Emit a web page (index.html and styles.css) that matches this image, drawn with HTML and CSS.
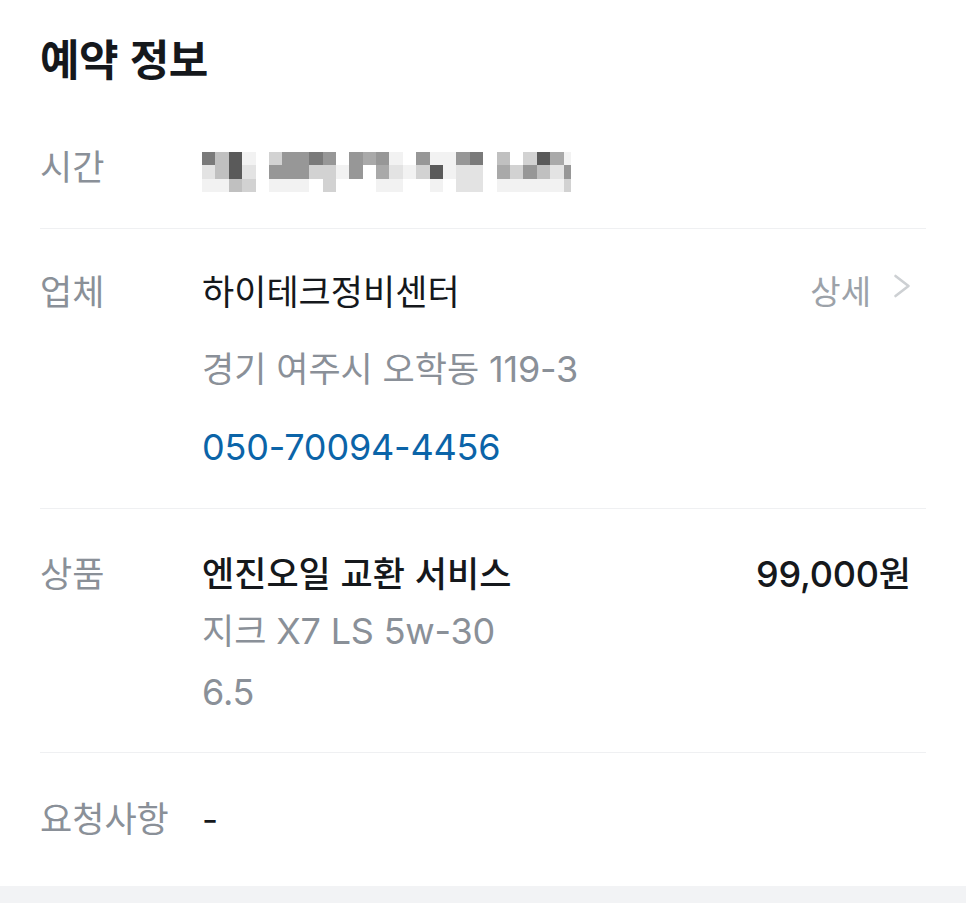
FILE: index.html
```html
<!DOCTYPE html>
<html lang="ko">
<head>
<meta charset="utf-8">
<title>예약 정보</title>
<link rel="stylesheet" href="styles.css">
</head>
<body>
<main class="card">
  <h1 class="title">예약 정보</h1>

  <section class="row row-time">
    <div class="label">시간</div>
    <div class="value">
      <div class="mosaic" aria-label="가려진 예약 시간">
        <span class="s7"></span><span class="s2"></span><span class="s1"></span>
        <span class="s4"></span><span class="s4"></span><span class="s1"></span>
        <span class="s8"></span><span class="s8"></span><span class="s4"></span>
        <span class="s1"></span><span class="s2"></span><span class="s3"></span>
        <span class="s0"></span><span class="s0"></span><span class="s0"></span>
        <span class="s3"></span><span class="s6"></span><span class="s1"></span>
        <span class="s6"></span><span class="s6"></span><span class="s1"></span>
        <span class="s6"></span><span class="s6"></span><span class="s1"></span>
        <span class="s7"></span><span class="s3"></span><span class="s0"></span>
        <span class="s6"></span><span class="s3"></span><span class="s3"></span>
        <span class="s0"></span><span class="s1"></span><span class="s0"></span>
        <span class="s6"></span><span class="s6"></span><span class="s0"></span>
        <span class="s5"></span><span class="s0"></span><span class="s0"></span>
        <span class="s6"></span><span class="s5"></span><span class="s1"></span>
        <span class="s1"></span><span class="s2"></span><span class="s1"></span>
        <span class="s0"></span><span class="s1"></span><span class="s0"></span>
        <span class="s6"></span><span class="s3"></span><span class="s0"></span>
        <span class="s1"></span><span class="s8"></span><span class="s1"></span>
        <span class="s1"></span><span class="s1"></span><span class="s0"></span>
        <span class="s6"></span><span class="s2"></span><span class="s2"></span>
        <span class="s7"></span><span class="s2"></span><span class="s2"></span>
        <span class="s0"></span><span class="s0"></span><span class="s0"></span>
        <span class="s4"></span><span class="s5"></span><span class="s1"></span>
        <span class="s0"></span><span class="s3"></span><span class="s1"></span>
        <span class="s3"></span><span class="s6"></span><span class="s1"></span>
        <span class="s8"></span><span class="s4"></span><span class="s1"></span>
        <span class="s5"></span><span class="s2"></span><span class="s1"></span>
        <span class="s1"></span><span class="s6"></span><span class="s3"></span>
      </div>
    </div>
  </section>

  <section class="row row-shop">
    <div class="label">업체</div>
    <div class="value">
      <div class="line-main">
        <span class="name">하이테크정비센터</span>
        <a class="detail" href="#">상세
          <svg class="chevron" width="18" height="24" viewBox="0 0 18 24" aria-hidden="true">
            <polyline points="2.5,2 15.5,12 2.5,22" fill="none" stroke="#cdd0d3" stroke-width="2.6" stroke-linecap="round" stroke-linejoin="round"/>
          </svg>
        </a>
      </div>
      <div class="sub addr">경기 여주시 오학동 <span class="lat">119-3</span></div>
      <div class="phone"><span class="lat">050-70094-4456</span></div>
    </div>
  </section>

  <section class="row row-product">
    <div class="label">상품</div>
    <div class="value">
      <div class="line-main">
        <span class="name strong">엔진오일 교환 서비스</span>
        <span class="price"><span class="lat">99,000</span>원</span>
      </div>
      <div class="sub spec">지크 <span class="lat">X7 LS 5w-30</span></div>
      <div class="sub qty"><span class="lat">6.5</span></div>
    </div>
  </section>

  <section class="row row-request">
    <div class="label">요청사항</div>
    <div class="value"><span class="dash">-</span></div>
  </section>
</main>
<div class="band"></div>
</body>
</html>
```

FILE: styles.css
```css
* { box-sizing: border-box; }

html, body {
  margin: 0;
  padding: 0;
  background: #ffffff;
}

body {
  font-family: "Noto Sans CJK KR", "Inter", sans-serif;
  color: #111317;
  -webkit-font-smoothing: antialiased;
}

.card {
  padding: 0 40px;
  background: #ffffff;
}

.title {
  margin: 0;
  padding: 29px 0 17px;
  font-size: 43px;
  line-height: 56px;
  font-weight: 700;
  color: #15181c;
  letter-spacing: -0.5px;
}

.row {
  display: flex;
  align-items: flex-start;
  font-size: 35px;
  line-height: 46px;
  border-bottom: 1px solid #eff0f2;
}

.row-time { padding: 40px 0 36px; }
.row-shop { padding: 38px 0 40px; }
.row-product { padding: 40px 0 39px; }
.row-request { padding: 41px 0 44px; border-bottom: none; }

.label {
  width: 162px;
  flex: none;
  color: #8a9098;
}

.value {
  flex: 1;
  min-width: 0;
}

.lat {
  font-family: "Inter", "Noto Sans CJK KR", sans-serif;
  font-size: 36px;
  line-height: 1;
  letter-spacing: -0.2px;
}

.mosaic {
  display: grid;
  grid-auto-flow: column;
  grid-template-rows: repeat(3, 13.4px);
  grid-template-columns: repeat(27, 13.4px) 7px;
  margin-top: 10px;
  width: max-content;
}

.mosaic span { display: block; }
.s0 { background: #ffffff; }
.s1 { background: #f2f2f2; }
.s2 { background: #e3e3e3; }
.s3 { background: #d2d2d2; }
.s4 { background: #c0c0c0; }
.s5 { background: #a9a9a9; }
.s6 { background: #979797; }
.s7 { background: #7a7a7a; }
.s8 { background: #5a5a5a; }

.line-main {
  display: flex;
  justify-content: space-between;
  align-items: flex-start;
}

.name { color: #15181c; }
.strong { font-weight: 500; }

.detail {
  display: flex;
  align-items: center;
  gap: 22px;
  margin-right: 15px;
  height: 46px;
  font-size: 33px;
  color: #9ca2a9;
  text-decoration: none;
}

.chevron { display: block; margin-top: -8px; }

.price {
  margin-right: 15px;
  font-weight: 500;
  color: #15181c;
}

.sub { color: #8a9098; }
.addr { margin-top: 31px; }
.phone {
  margin-top: 32px;
  color: #0b64a8;
}
.spec { margin-top: 11px; }
.qty { margin-top: 15px; }

.dash {
  font-family: "Inter", sans-serif;
  color: #15181c;
}

.band {
  height: 18px;
  background: #f2f3f5;
}
```
